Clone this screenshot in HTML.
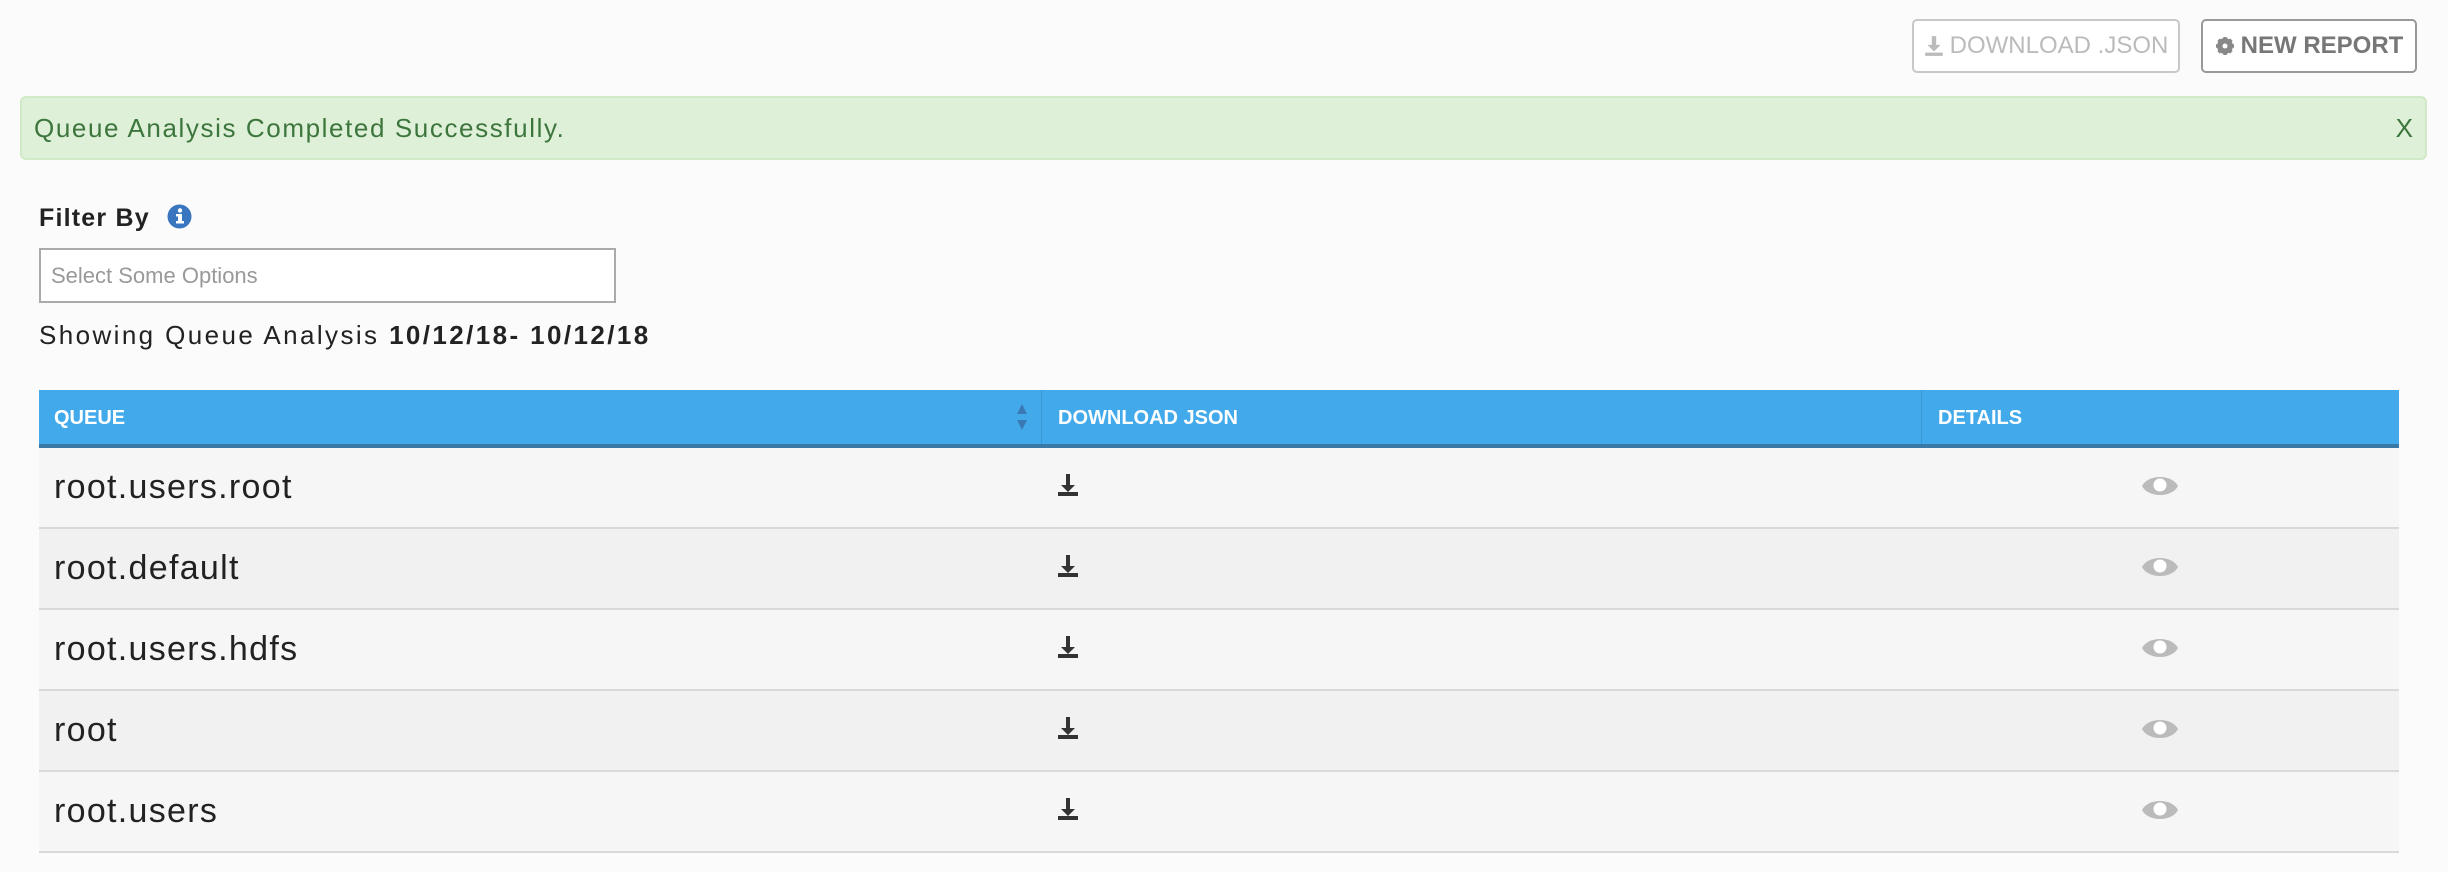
<!DOCTYPE html>
<html><head><style>
body{margin:0;width:2448px;height:872px;background:#fbfbfb;font-family:"Liberation Sans",sans-serif;position:relative;overflow:hidden}
.abs{position:absolute}
.btn{position:absolute;top:19px;height:54px;border:2px solid #c8c8c8;border-radius:5px;background:#fff;box-sizing:border-box;font-size:24px;display:flex;align-items:center;justify-content:center;gap:6px}
.alert{left:20px;top:96px;width:2407px;height:64px;background:#dff0d8;border:2px solid #d0e9c6;border-radius:6px;box-sizing:border-box;color:#3c763d;font-size:26px}
.row{position:absolute;left:39px;width:2360px;height:79px;border-bottom:2px solid #d9d9d9}
.row span{position:absolute;left:15px;top:20px;font-size:34px;color:#222;letter-spacing:1.3px}
.dl{position:absolute;left:1019px;top:26px}
.eye{position:absolute;left:2103px;top:26px}
</style></head><body>
<div class="btn" style="left:1912px;width:268px;color:#bbb;">
<svg width="20" height="22" viewBox="0 0 18 20"><path d="M7 1h4v8h4l-6 6-6-6h4z" fill="#bbb"/><rect x="1" y="16" width="16" height="3" fill="#bbb"/></svg>DOWNLOAD .JSON</div>
<div class="btn" style="left:2201px;width:216px;color:#777;border-color:#999;font-weight:bold">
<svg width="20" height="20" viewBox="0 0 20 20"><circle cx="10" cy="10" r="6" fill="none" stroke="#888" stroke-width="4"/><g stroke="#888" stroke-width="3.5"><path d="M10 1v18M1 10h18M3.6 3.6l12.8 12.8M16.4 3.6L3.6 16.4"/></g><circle cx="10" cy="10" r="2.5" fill="#fff"/></svg>NEW REPORT</div>
<div class="abs alert"><span class="abs" style="left:12px;top:15px;letter-spacing:1.6px">Queue Analysis Completed Successfully.</span><span class="abs" style="right:12px;top:15px">X</span></div>
<div class="abs" style="left:39px;top:204px;font-size:25px;font-weight:bold;color:#222;letter-spacing:1.2px">Filter By</div>
<svg class="abs" style="left:167px;top:204px" width="25" height="25" viewBox="0 0 25 25"><circle cx="12.5" cy="12.5" r="12" fill="#3a76c0"/><rect x="11" y="10" width="4" height="9" fill="#fff"/><rect x="9" y="10" width="4" height="2.5" fill="#fff"/><rect x="9" y="17" width="8" height="2.5" fill="#fff"/><circle cx="13" cy="6.5" r="2.2" fill="#fff"/></svg>
<div class="abs" style="left:39px;top:248px;width:577px;height:55px;border:2px solid #aaa;box-sizing:border-box;background:#fff"><span class="abs" style="left:10px;top:13px;font-size:22px;color:#999">Select Some Options</span></div>
<div class="abs" style="left:39px;top:320px;font-size:26px;color:#222;letter-spacing:2.4px">Showing Queue Analysis <b>10/12/18- 10/12/18</b></div>
<div class="abs" style="left:39px;top:390px;width:2360px;height:54px;background:#42aaeb;border-bottom:4px solid #3a78a6;color:#fff;font-size:20px;font-weight:bold">
<span class="abs" style="left:15px;top:17px">QUEUE</span>
<svg class="abs" style="left:977px;top:14px" width="12" height="26"><path d="M6 0l5 10H1z" fill="#3a78b6"/><path d="M6 26l5-10H1z" fill="#3a78b6"/></svg>
<div class="abs" style="left:1002px;top:0;width:1px;height:54px;background:#3c96d0"></div>
<span class="abs" style="left:1019px;top:17px">DOWNLOAD JSON</span>
<div class="abs" style="left:1882px;top:0;width:1px;height:54px;background:#3c96d0"></div>
<span class="abs" style="left:1899px;top:17px">DETAILS</span>
</div>
<div class="row" style="top:448px;background:#f6f6f6"><span>root.users.root</span><svg class="dl" width="20" height="22" viewBox="0 0 20 22"><path d="M8 0h4v11h5l-7 7-7-7h5z" fill="#333"/><rect x="0" y="18" width="20" height="4" fill="#333"/></svg><svg class="eye" width="36" height="24" viewBox="0 0 36 24"><path d="M0 12C6 0 30 0 36 12C30 24 6 24 0 12z" fill="#bbb"/><circle cx="18" cy="11" r="6.5" fill="#fff"/></svg></div>
<div class="row" style="top:529px;background:#f1f1f1"><span>root.default</span><svg class="dl" width="20" height="22" viewBox="0 0 20 22"><path d="M8 0h4v11h5l-7 7-7-7h5z" fill="#333"/><rect x="0" y="18" width="20" height="4" fill="#333"/></svg><svg class="eye" width="36" height="24" viewBox="0 0 36 24"><path d="M0 12C6 0 30 0 36 12C30 24 6 24 0 12z" fill="#bbb"/><circle cx="18" cy="11" r="6.5" fill="#fff"/></svg></div>
<div class="row" style="top:610px;background:#f6f6f6"><span>root.users.hdfs</span><svg class="dl" width="20" height="22" viewBox="0 0 20 22"><path d="M8 0h4v11h5l-7 7-7-7h5z" fill="#333"/><rect x="0" y="18" width="20" height="4" fill="#333"/></svg><svg class="eye" width="36" height="24" viewBox="0 0 36 24"><path d="M0 12C6 0 30 0 36 12C30 24 6 24 0 12z" fill="#bbb"/><circle cx="18" cy="11" r="6.5" fill="#fff"/></svg></div>
<div class="row" style="top:691px;background:#f1f1f1"><span>root</span><svg class="dl" width="20" height="22" viewBox="0 0 20 22"><path d="M8 0h4v11h5l-7 7-7-7h5z" fill="#333"/><rect x="0" y="18" width="20" height="4" fill="#333"/></svg><svg class="eye" width="36" height="24" viewBox="0 0 36 24"><path d="M0 12C6 0 30 0 36 12C30 24 6 24 0 12z" fill="#bbb"/><circle cx="18" cy="11" r="6.5" fill="#fff"/></svg></div>
<div class="row" style="top:772px;background:#f6f6f6"><span>root.users</span><svg class="dl" width="20" height="22" viewBox="0 0 20 22"><path d="M8 0h4v11h5l-7 7-7-7h5z" fill="#333"/><rect x="0" y="18" width="20" height="4" fill="#333"/></svg><svg class="eye" width="36" height="24" viewBox="0 0 36 24"><path d="M0 12C6 0 30 0 36 12C30 24 6 24 0 12z" fill="#bbb"/><circle cx="18" cy="11" r="6.5" fill="#fff"/></svg></div>
</body></html>
